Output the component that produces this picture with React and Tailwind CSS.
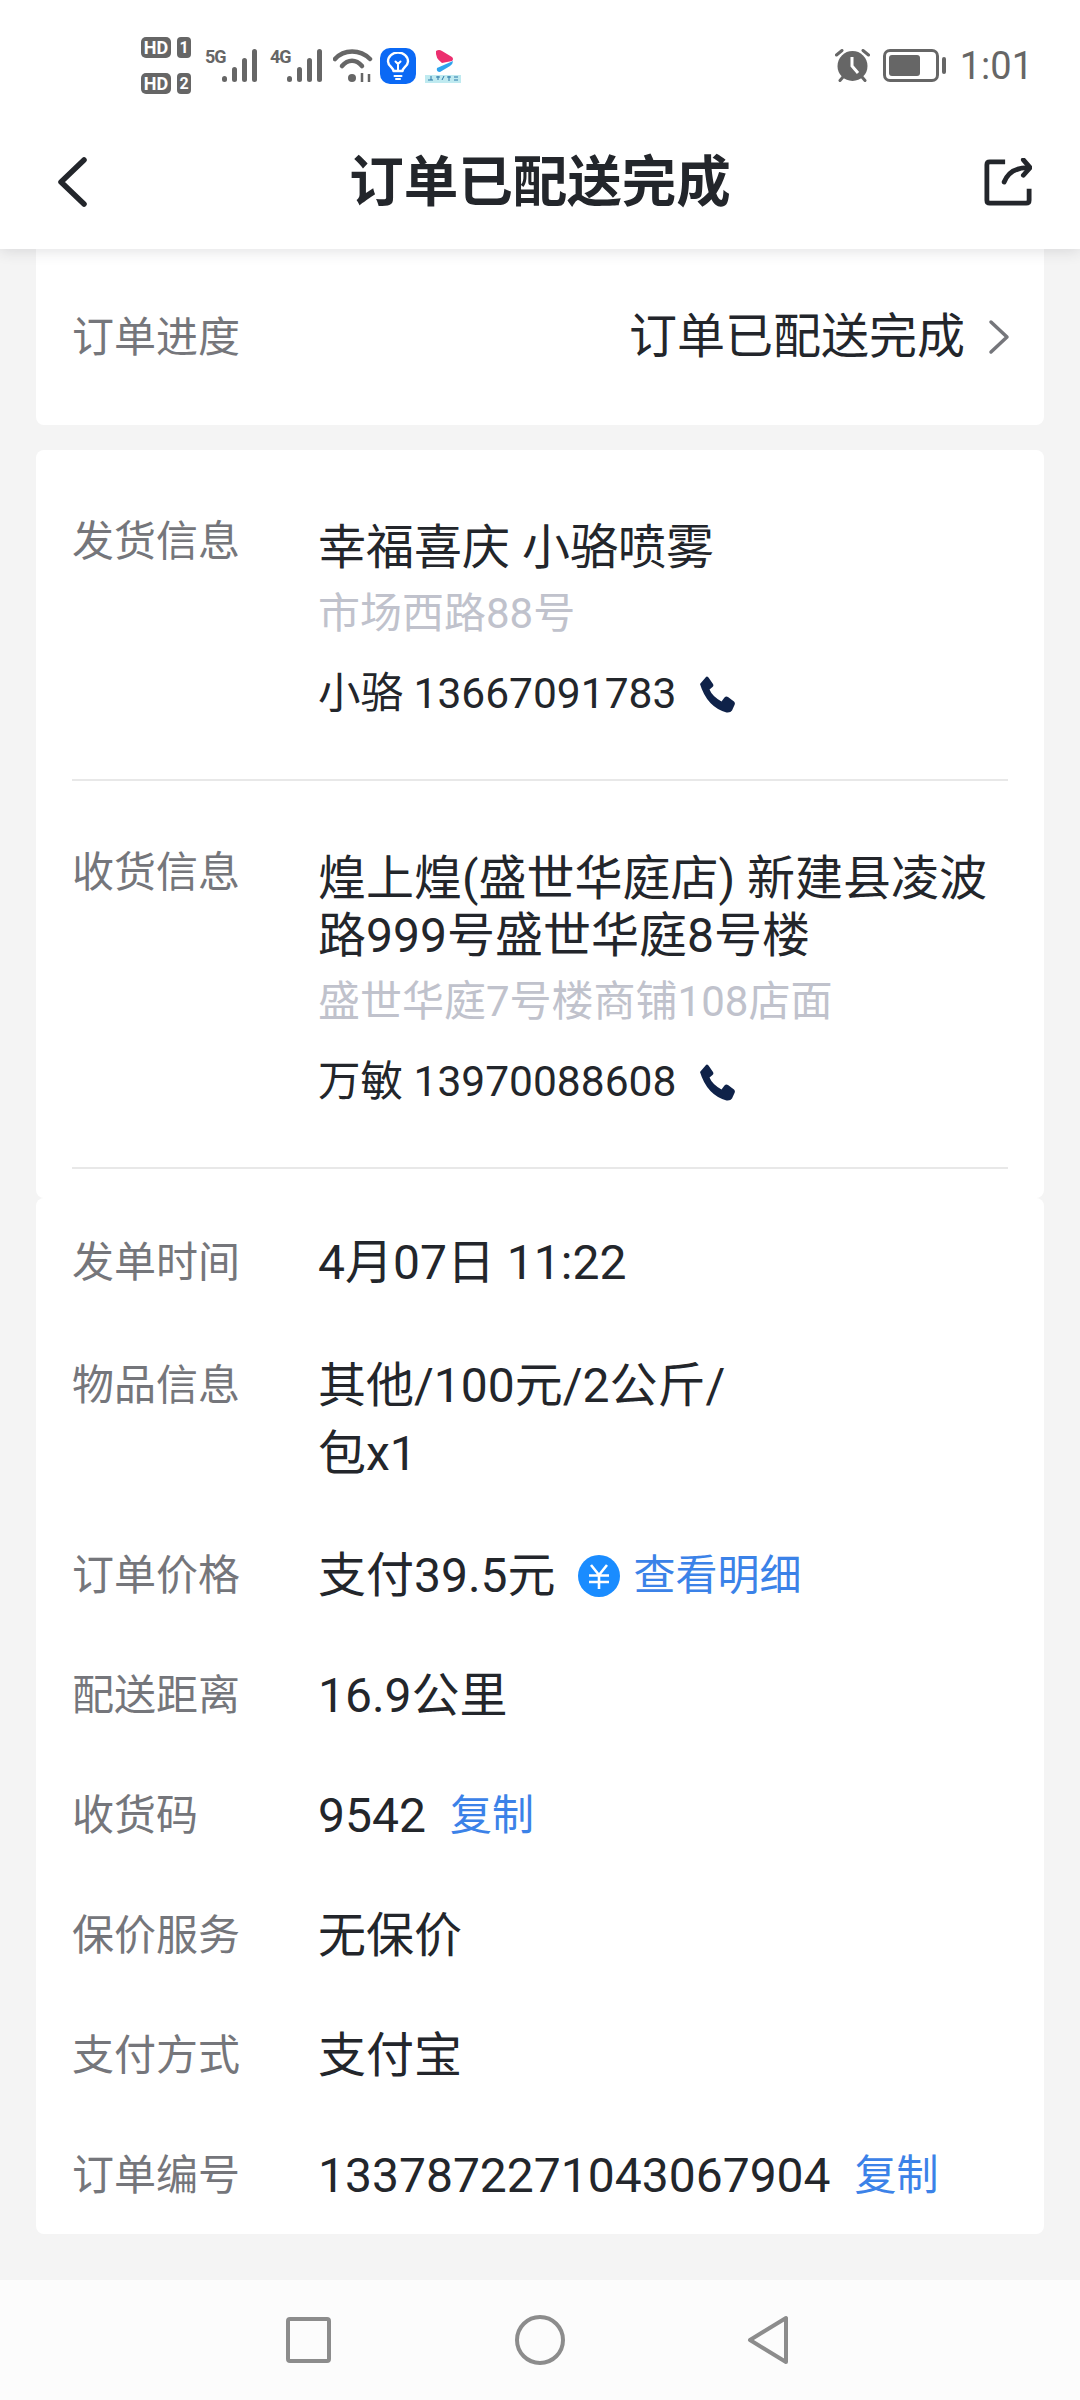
// status bar bits
function HdBadge({ num }) {
  return (
    <div className="flex items-center gap-[6px]">
      <div className="w-[30px] h-[21px] rounded-[5px] bg-[#666666] text-white text-[18px] leading-[21px] font-bold text-center">HD</div>
      <div className="w-[14px] h-[21px] rounded-[4px] bg-[#666666] text-white text-[16px] leading-[21px] font-bold text-center">{num}</div>
    </div>
  );
}

function Signal({ label }) {
  return (
    <div className="relative w-[53px] h-[34px]">
      <span className="absolute left-0 top-0 text-[#666666] text-[18px] leading-[16px] font-bold tracking-[-1px]">{label}</span>
      <svg className="absolute right-0 top-0" width="36" height="34" viewBox="0 0 36 34" fill="#666666">
        <rect x="0" y="27" width="5" height="6" rx="2.5" />
        <rect x="10" y="18" width="5" height="15" rx="2.5" />
        <rect x="20" y="9" width="5" height="24" rx="2.5" />
        <rect x="30" y="0" width="5" height="33" rx="2.5" />
      </svg>
    </div>
  );
}

function Wifi() {
  return (
    <svg width="40" height="36" viewBox="0 0 40 36" fill="none" stroke="#666666" strokeWidth="4.5" strokeLinecap="round">
      <path d="M2 11 C11 1 27 1 37 11" />
      <path d="M9 18 C15 11 23 11 29 18" />
      <circle cx="19" cy="30" r="4" fill="#666666" stroke="none" />
      <path d="M29 34 V25 M36 26 V34" strokeWidth="2.5" strokeLinecap="butt" />
    </svg>
  );
}

function BulbApp() {
  return (
    <div className="w-[36px] h-[36px] rounded-[10px] bg-[#0b69f5] flex items-center justify-center">
      <svg width="24" height="28" viewBox="0 0 24 28" fill="none" stroke="white" strokeWidth="2.4" strokeLinecap="round" strokeLinejoin="round">
        <path d="M7.5 19 C7.5 15.5 2 14 2 9.5 A10 9 0 0 1 22 9.5 C22 14 16.5 15.5 16.5 19 Z" />
        <path d="M8.5 24 H15.5 M10 27 H14 M12 19 V12 L9.5 9.5 M12 12 L14.5 9.5" strokeWidth="2" />
      </svg>
    </div>
  );
}

function LogoApp() {
  return (
    <svg width="36" height="36" viewBox="0 0 36 36">
      <path d="M11 3 Q14 1 17 3 L27 9 Q29 11 27 13 L17 15 Q10 10 11 3 Z" fill="#ec2f6f" />
      <path d="M12 20 L28 13 Q28 16 25 18 L15 24 Q11 24 12 20 Z" fill="#2ea3ee" />
      <rect x="0" y="27" width="36" height="8" fill="#bfeaf0" />
      <path d="M3 32 H8 M6 28 V32 M11 29 H15 M13 28 V32 M19 28 L17 32 M22 29 H26 M24 28 V33 M29 29 H33 M29 32 H33" stroke="#2b78a8" strokeWidth="1" fill="none" />
    </svg>
  );
}

function Alarm() {
  return (
    <svg width="35" height="33" viewBox="0 0 35 33">
      <circle cx="17.5" cy="17" r="15" fill="#666666" />
      <path d="M17 8 V17 L23 24" fill="none" stroke="white" strokeWidth="3" />
      <path d="M1.5 6 L7 1.5 M33.5 6 L28 1.5 M5 31.5 L8 28 M30 31.5 L27 28" fill="none" stroke="#666666" strokeWidth="3" strokeLinecap="round" />
    </svg>
  );
}

function Battery() {
  return (
    <div className="flex items-center gap-[3px]">
      <div className="w-[56px] h-[33px] rounded-[7px] border-[3px] border-[#666666] p-[3px]">
        <div className="w-[31px] h-full rounded-[3px] bg-[#666666]" />
      </div>
      <div className="w-[4px] h-[17px] rounded-[2px] bg-[#666666]" />
    </div>
  );
}

function PhoneIcon() {
  return (
    <svg className="ml-[23px]" width="36" height="37" viewBox="0 0 36 37" fill="#0f2249">
      <path d="M1 8 L7 1 Q8 0 9.5 1.5 L14 8 Q15 10 13.5 11 L10.5 13.5 Q13 20 22.5 25.5 L25.5 21.5 Q27 20 29 21 L35 25.5 Q36.5 27 35.5 29 L33 34.5 Q31.5 37 27.5 36.5 Q8 31 1 8 Z" />
    </svg>
  );
}

function AddressBlock({ label, title, address, contact }) {
  return (
    <div className="flex pt-[68px] pb-[57px] border-b-2 border-[#e8e8e8]">
      <div className="w-[246px] shrink-0 text-[42px] leading-[47px] text-[#75767b]">{label}</div>
      <div className="flex-1">
        <div className="mt-[1px] text-[48px] leading-[57px] text-[#23262b]">{title}</div>
        <div className="mt-[10px] text-[42px] leading-[56px] text-[#c0c2cc]">{address}</div>
        <div className="mt-[24px] flex items-center text-[42.5px] leading-[56px] text-[#23262b]">
          {contact}
          <PhoneIcon />
        </div>
      </div>
    </div>
  );
}

function InfoRow({ label, className = "", children }) {
  return (
    <div className={`flex ${className}`}>
      <div className="w-[246px] shrink-0 text-[42px] leading-[68px] text-[#75767b]">{label}</div>
      <div className="flex-1 flex items-center text-[48px] leading-[68px] text-[#23262b]">{children}</div>
    </div>
  );
}

function CopyLink() {
  return <span className="ml-[24px] text-[42px] text-[#3b82e8]">复制</span>;
}

export default function App() {
  return (
    <div className="w-[1080px] h-[2400px] flex flex-col bg-[#f4f4f4] overflow-hidden font-['Roboto','Noto_Sans_CJK_SC',sans-serif]">
      {/* Header */}
      <header className="relative z-10 bg-white shadow-[0_2px_14px_rgba(40,40,60,0.14)]">
        <div className="flex items-center justify-between h-[57px] mt-[37px] mb-[20px] pl-[141px] pr-[47px]">
          <div className="flex items-center">
            <div className="flex flex-col gap-[15px]">
              <HdBadge num="1" />
              <HdBadge num="2" />
            </div>
            <div className="ml-[14px]"><Signal label="5G" /></div>
            <div className="ml-[12px]"><Signal label="4G" /></div>
            <div className="ml-[10px]"><Wifi /></div>
            <div className="ml-[7px]"><BulbApp /></div>
            <div className="ml-[9px]"><LogoApp /></div>
          </div>
          <div className="flex items-center">
            <Alarm />
            <div className="ml-[13px]"><Battery /></div>
            <span className="ml-[14px] text-[38px] leading-[40px] text-[#666666]">1:01</span>
          </div>
        </div>
        <div className="grid grid-cols-[1fr_auto_1fr] items-center h-[135px] pt-[1px] px-[48px]">
          <svg className="ml-[8px]" width="32" height="50" viewBox="0 0 32 50" fill="none" stroke="#23262b" strokeWidth="5.5" strokeLinecap="round" strokeLinejoin="round">
            <path d="M28 3 L5 25 L28 47" />
          </svg>
          <h1 className="text-[54.5px] leading-[70px] font-bold text-[#23262b]">订单已配送完成</h1>
          <svg className="justify-self-end" width="48" height="48" viewBox="0 0 50 50" fill="none" stroke="#23262b" strokeWidth="5" strokeLinejoin="round">
            <path d="M22 4 H6 Q3 4 3 7 V44 Q3 47 6 47 H44 Q47 47 47 44 V32" strokeLinecap="butt" />
            <path d="M21 25 C25 15 33 10 46 10" strokeLinecap="round" />
            <path d="M41 2 L48 10 L41 18" strokeLinecap="round" />
          </svg>
        </div>
      </header>

      <main className="flex-1 px-[36px]">
        {/* Progress */}
        <div className="h-[176px] flex items-center bg-white rounded-b-[8px] pl-[36px] pr-[34px]">
          <span className="text-[42px] text-[#75767b]">订单进度</span>
          <span className="ml-auto text-[48px] text-[#23262b]">订单已配送完成</span>
          <svg className="ml-[23px]" width="22" height="36" viewBox="0 0 22 36" fill="none" stroke="#75767b" strokeWidth="3.5" strokeLinecap="round" strokeLinejoin="round">
            <path d="M3 3 L19 18 L3 33" />
          </svg>
        </div>

        {/* Addresses */}
        <div className="mt-[25px] h-[748px] bg-white rounded-[8px] pl-[36px] pr-[36px]">
          <AddressBlock label="发货信息" title="幸福喜庆 小骆喷雾" address="市场西路88号" contact="小骆 13667091783" />
          <AddressBlock label="收货信息" title={<>煌上煌(盛世华庭店) 新建县凌波<br />路999号盛世华庭8号楼</>} address="盛世华庭7号楼商铺108店面" contact="万敏 13970088608" />
        </div>

        {/* Order details */}
        <div className="flex flex-col gap-[52px] bg-white rounded-[8px] pl-[36px] pr-[36px] pt-[31px] pb-[24px]">
          <InfoRow label="发单时间">4月07日 11:22</InfoRow>
          <InfoRow label="物品信息" className="mt-[3px] mb-[2px]"><span>其他/100元/2公斤/<br />包x1</span></InfoRow>
          <InfoRow label="订单价格">
            支付39.5元
            <svg className="ml-[22px]" width="42" height="42" viewBox="0 0 42 42" fill="none">
              <circle cx="21" cy="21" r="21" fill="#1a8cff" />
              <path d="M13 10 L21 20 L29 10 M11 20.5 H31 M11 27 H31 M21 20 V34" stroke="white" strokeWidth="2.6" />
            </svg>
            <span className="ml-[14px] text-[42px] text-[#3b82e8]">查看明细</span>
          </InfoRow>
          <InfoRow label="配送距离">16.9公里</InfoRow>
          <InfoRow label="收货码">9542<CopyLink /></InfoRow>
          <InfoRow label="保价服务">无保价</InfoRow>
          <InfoRow label="支付方式">支付宝</InfoRow>
          <InfoRow label="订单编号">1337872271043067904<CopyLink /></InfoRow>
        </div>
      </main>

      {/* Navigation bar */}
      <nav className="h-[120px] bg-[#fcfcfc] flex items-center justify-center pr-[6px]">
        <svg width="45" height="46" viewBox="0 0 45 46" fill="none" stroke="#8c8c8c" strokeWidth="4">
          <rect x="2" y="2" width="41" height="42" rx="2" />
        </svg>
        <svg className="ml-[184px]" width="50" height="50" viewBox="0 0 50 50" fill="none" stroke="#8c8c8c" strokeWidth="4">
          <circle cx="25" cy="25" r="23" />
        </svg>
        <svg className="ml-[182px]" width="42" height="50" viewBox="0 0 42 50" fill="none" stroke="#8c8c8c" strokeWidth="4" strokeLinejoin="round">
          <path d="M39 3 V47 L3 25 Z" />
        </svg>
      </nav>
    </div>
  );
}
